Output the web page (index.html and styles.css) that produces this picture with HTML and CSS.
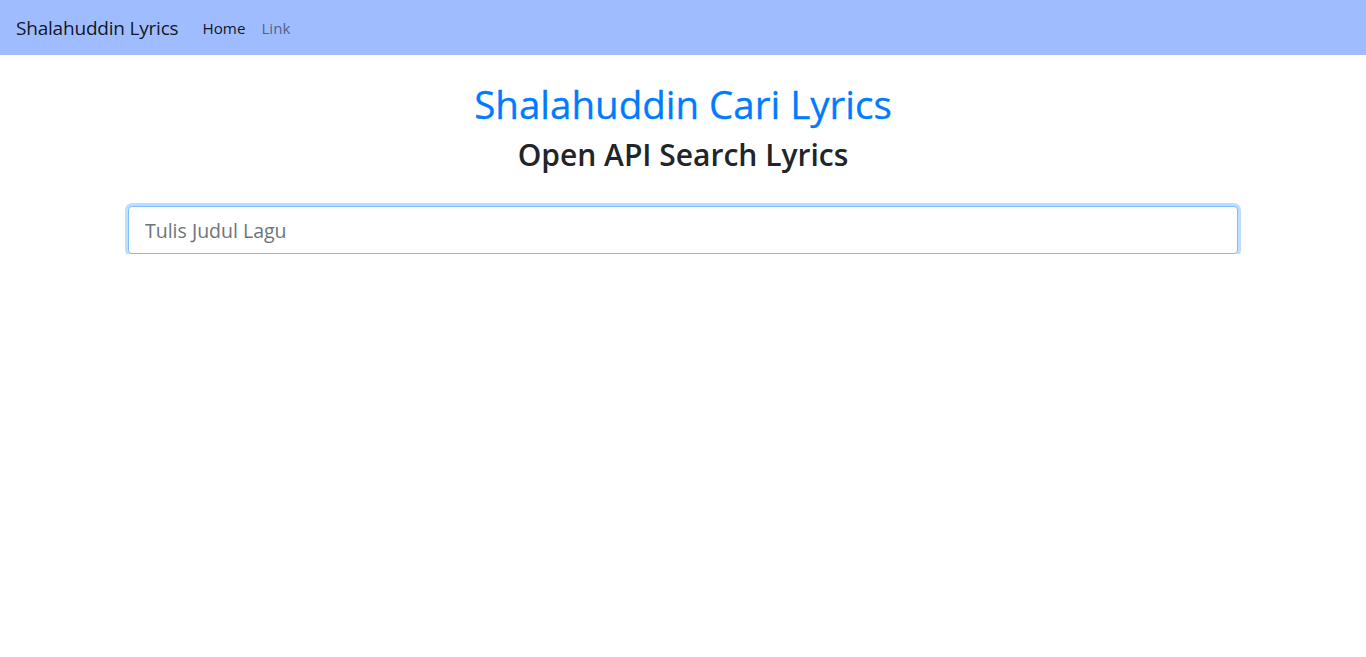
FILE: index.html
```html
<!DOCTYPE html>
<html lang="id">
<head>
<meta charset="utf-8">
<title>Shalahuddin Lyrics</title>
<link rel="stylesheet" href="styles.css">
</head>
<body>
<nav class="navbar">
  <a class="brand" href="#">Shalahuddin Lyrics</a>
  <ul class="nav">
    <li><a class="nav-link active" href="#">Home</a></li>
    <li><a class="nav-link" href="#">Link</a></li>
  </ul>
</nav>
<main class="container">
  <h1 class="title">Shalahuddin Cari Lyrics</h1>
  <h2 class="subtitle">Open API Search Lyrics</h2>
  <div class="search">
    <input class="search-input" type="text" placeholder="Tulis Judul Lagu">
  </div>
</main>
</body>
</html>
```
FILE: styles.css
```css
* { box-sizing: border-box; }
html, body {
  margin: 0;
  padding: 0;
  background: #fff;
  font-family: "Open Sans", "Noto Sans", "DejaVu Sans", sans-serif;
  color: #212529;
}
a { text-decoration: none; }

.navbar {
  display: flex;
  align-items: center;
  height: 55px;
  padding: 0 16px;
  background: #9ebcff;
}
.brand {
  font-size: 19px;
  color: rgba(0,0,0,.9);
  margin-right: 24px;
  letter-spacing: -0.2px;
}
.nav {
  display: flex;
  list-style: none;
  margin: 0;
  padding: 0;
}
.nav-link {
  display: block;
  padding: 8px 8px;
  font-size: 15.2px;
  color: rgba(0,0,0,.5);
}
.nav li:first-child .nav-link { padding-left: 0; }
.nav-link.active { color: rgba(0,0,0,.9); }

.container {
  max-width: 1140px;
  margin: 0 auto;
  padding: 25px 15px 0;
}
.title {
  margin: 0 0 8px;
  text-align: center;
  font-size: 38.5px;
  line-height: 48px;
  font-weight: 500;
  color: #007bff;
  -webkit-text-stroke: 0.3px #007bff;
}
.subtitle {
  margin: 0;
  text-align: center;
  font-size: 30px;
  line-height: 38px;
  font-weight: 600;
  color: #212529;
}
.search {
  margin-top: 32px;
}
.search-input {
  display: block;
  width: 100%;
  height: 48px;
  padding: 0 16px;
  font-family: inherit;
  font-size: 19.5px;
  color: #495057;
  background: #fff;
  border: 1px solid #80bdff;
  border-radius: 4px;
  box-shadow: 0 0 0 3px rgba(0,123,255,.25);
  outline: none;
}
.search-input::placeholder { color: #6c757d; }
```
